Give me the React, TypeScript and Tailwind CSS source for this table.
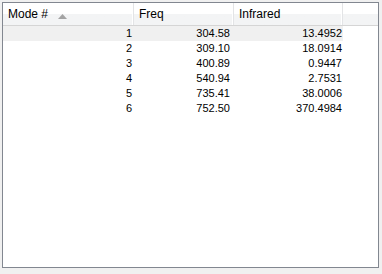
const rows = [
  { mode: 1, freq: "304.58", ir: "13.4952" },
  { mode: 2, freq: "309.10", ir: "18.0914" },
  { mode: 3, freq: "400.89", ir: "0.9447" },
  { mode: 4, freq: "540.94", ir: "2.7531" },
  { mode: 5, freq: "735.41", ir: "38.0006" },
  { mode: 6, freq: "752.50", ir: "370.4984" },
];

const HeaderCell = ({ label, width, sorted }: { label: string; width: string; sorted?: boolean }) => (
  <div className={`${width} relative flex items-center pl-[5px] border-r border-[#e3e4e6] shadow-[inset_-1px_0_0_#ffffff]`}>
    <span>{label}</span>
    {sorted && (
      <svg className="absolute left-[55px] top-[11px]" width="9" height="5" viewBox="0 0 9 5">
        <polygon points="4.5,0 9,5 0,5" fill="#a3a3a3" />
      </svg>
    )}
  </div>
);

const ModeList = () => {
  return (
    <div className="w-[382px] h-[274px] bg-[#f0f0f0] pt-[2px] pl-[2px]" style={{ fontFamily: '"Liberation Sans", Arial, sans-serif' }}>
      <div className="w-[377px] h-[266px] border border-[#828790] bg-white flex flex-col">
        <div className="h-[23px] flex border-b border-[#d5d5d5] bg-gradient-to-b from-white from-50% to-[#f3f4f5] to-50% text-[12px] text-black">
          <HeaderCell label="Mode #" width="w-[131px]" sorted />
          <HeaderCell label="Freq" width="w-[100px]" />
          <HeaderCell label="Infrared" width="w-[109px]" />
          <div className="flex-1" />
        </div>
        <div className="text-[11px] text-black">
          {rows.map((r, i) => (
            <div key={r.mode} className={`w-[340px] h-[15px] flex items-center ${i === 0 ? "bg-[#f0f0f0]" : ""}`}>
              <div className="w-[131px] text-right pr-[2px]">{r.mode}</div>
              <div className="w-[100px] text-right pr-[4px]">{r.freq}</div>
              <div className="w-[109px] text-right pr-[1px]">{r.ir}</div>
            </div>
          ))}
        </div>
      </div>
    </div>
  );
};

export default function App() {
  return <ModeList />;
}
